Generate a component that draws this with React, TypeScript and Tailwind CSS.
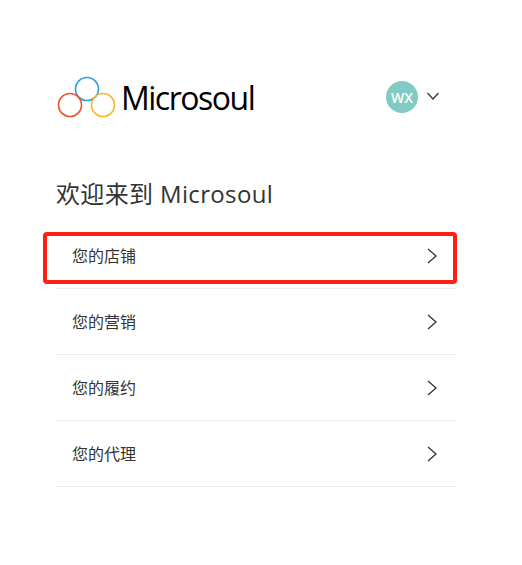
const FONT = "font-['Open_Sans','Noto_Sans_CJK_SC',sans-serif]";
const items = ["您的店铺", "您的营销", "您的履约", "您的代理"];

function Logo() {
  return (
    <svg width="66" height="42" viewBox="0 0 66 42" fill="none" className="block">
      <circle cx="30" cy="13" r="11.5" stroke="#2a9fdc" strokeWidth="1.6" />
      <circle cx="13" cy="29" r="11.5" stroke="#e9502f" strokeWidth="1.6" />
      <circle cx="46" cy="29" r="11.5" stroke="#f9b52a" strokeWidth="1.6" />
    </svg>
  );
}

function Right() {
  return (
    <svg width="10" height="16" viewBox="0 0 10 16" fill="none" className="block">
      <path d="M1 1l8 7-8 7" stroke="#333333" strokeWidth="1.3" />
    </svg>
  );
}

function Down() {
  return (
    <svg width="12" height="8" viewBox="0 0 12 8" fill="none" className="block">
      <path d="M.5 1l5.500 6 5.500-6" stroke="#333333" strokeWidth="1.2" />
    </svg>
  );
}

export default function App() {
  return (
    <div className={`w-[522px] h-[565px] bg-white pt-[76px] pl-[56px] ${FONT}`}>
      <div className="w-[400px]">
        <div className="flex items-center h-[42px]">
          <div className="ml-[1px]">
            <Logo />
          </div>
          <span className="text-[32px] leading-none text-black -ml-[2px] mt-[2px] tracking-[-1.5px]">
            Microsoul
          </span>
          <div className="ml-auto flex items-center">
            <div className="w-8 h-8 rounded-full bg-[#80cbc4] text-white text-[14px] font-semibold flex items-center justify-center">
              WX
            </div>
            <div className="ml-[9px] mr-[17px] -mt-[2px]">
              <Down />
            </div>
          </div>
        </div>
        <h1 className="mt-[59px] text-[24px] leading-[33px] font-normal text-[#333333] tracking-[0.35px]">
          欢迎来到 Microsoul
        </h1>
        <ul className="relative mt-[13px]">
          {items.map((t) => (
            <li
              key={t}
              className="h-[66px] border-b border-[#eeeeee] flex items-center justify-between px-[16px] text-[16px] text-[#333333]"
            >
              <span>{t}</span>
              <div className="mr-[3px]">
                <Right />
              </div>
            </li>
          ))}
          <div className="absolute left-[-13px] top-[9px] w-[414px] h-[52px] border-[4px] border-[#ff2015] rounded-[4px]" />
        </ul>
      </div>
    </div>
  );
}
